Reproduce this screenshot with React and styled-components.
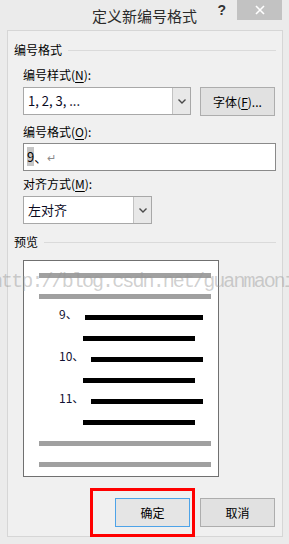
import React from 'react';
import styled, { createGlobalStyle } from 'styled-components';

const GlobalStyle = createGlobalStyle`
  html, body {
    margin: 0;
    padding: 0;
    background: #ebebeb;
  }
  body {
    font-family: "Noto Sans CJK SC", "Noto Sans", sans-serif;
    color: #000;
  }
`;

const App = () => {
  return (
    <>
      <GlobalStyle />
      <Window>
        <TitleBar>
          <Title>定义新编号格式</Title>
          <Controls>
            <Help>?</Help>
            <Close>
              <svg width="10" height="10" viewBox="0 0 10 10">
                <path d="M1 1 L9 9 M9 1 L1 9" stroke="#fff" strokeWidth="1.6" />
              </svg>
            </Close>
          </Controls>
        </TitleBar>

        <Body>
          <Client>
            <GroupHeader>编号格式</GroupHeader>
            <Fields>
              <Label $mt={9}>编号样式(<u>N</u>):</Label>
              <Row>
                <Combo $w={168}>
                  <ComboText>1, 2, 3, ...</ComboText>
                  <ComboArrow>
                    <Chevron />
                  </ComboArrow>
                </Combo>
                <Button>字体(<u>F</u>)...</Button>
              </Row>

              <Label $mt={8}>编号格式(<u>O</u>):</Label>
              <TextInput>
                <Selected>9</Selected>、<Para>↵</Para>
              </TextInput>

              <Label $mt={5}>对齐方式(<u>M</u>):</Label>
              <Row>
                <Combo $w={129}>
                  <ComboText>左对齐</ComboText>
                  <ComboArrow>
                    <Chevron />
                  </ComboArrow>
                </Combo>
              </Row>
            </Fields>

            <GroupHeader $mt={10}>预览</GroupHeader>
            <Preview>
              <GrayBar $mt={0} />
              <GrayBar $mt={16} />
              {['9、', '10、', '11、'].map((n) => (
                <Item key={n}>
                  <ItemRow>
                    <Num>{n}</Num>
                    <Bar />
                  </ItemRow>
                  <SubBar />
                </Item>
              ))}
              <GrayBar $mt={16} />
              <GrayBar $mt={16} />
            </Preview>

            <Footer>
              <OkWrap>
                <Button $primary>确定</Button>
                <Highlight />
              </OkWrap>
              <Button>取消</Button>
            </Footer>
          </Client>
        </Body>

        <Watermark>http://blog.csdn.net/guanmaoning</Watermark>
      </Window>
    </>
  );
};

const Chevron = () => (
  <svg width="8" height="5" viewBox="0 0 8 5">
    <polyline points="0.5,0.5 4,4 7.5,0.5" fill="none" stroke="#4a4a4a" strokeWidth="1.4" />
  </svg>
);

// Styled components
const Window = styled.div`
  position: relative;
  width: 289px;
  height: 544px;
  overflow: hidden;
  display: flex;
  flex-direction: column;
  background: #ebebeb;
  box-sizing: border-box;
`;

const TitleBar = styled.div`
  height: 30px;
  flex-shrink: 0;
  display: grid;
  grid-template-columns: 1fr auto 1fr;
`;

const Title = styled.div`
  grid-column: 2;
  font-size: 15px;
  line-height: 30px;
  padding-top: 1px;
  color: #2b2b2b;
  white-space: nowrap;
`;

const Controls = styled.div`
  grid-column: 3;
  display: flex;
  justify-content: flex-end;
  align-items: flex-start;
  padding-right: 7px;
`;

const Help = styled.div`
  font-family: "Liberation Sans", Arial, sans-serif;
  font-weight: bold;
  font-size: 14px;
  line-height: 20px;
  color: #333;
  margin-right: 11px;
`;

const Close = styled.div`
  width: 45px;
  height: 20px;
  background: #c2c2c2;
  display: flex;
  align-items: center;
  justify-content: center;
`;

const Body = styled.div`
  flex: 1;
  display: flex;
  padding: 0 7px 7px;
`;

const Client = styled.div`
  flex: 1;
  display: flex;
  flex-direction: column;
  border: 1px solid #d6d6d6;
  background: #f0f0f0;
  padding: 11px 6px 0;
`;

const GroupHeader = styled.div`
  display: flex;
  align-items: center;
  font-size: 12px;
  line-height: 16px;
  margin-top: ${({ $mt }) => $mt || 0}px;

  &::after {
    content: '';
    flex: 1;
    height: 1px;
    background: #dadada;
    margin-left: 6px;
  }
`;

const Fields = styled.div`
  display: flex;
  flex-direction: column;
  padding-left: 9px;
`;

const Label = styled.div`
  font-size: 12px;
  line-height: 16px;
  margin-top: ${({ $mt }) => $mt}px;

  u {
    text-decoration-thickness: 1px;
    text-underline-offset: 2px;
  }
`;

const Row = styled.div`
  display: flex;
  gap: 9px;
  margin-top: 4px;
`;

const Combo = styled.div`
  width: ${({ $w }) => $w}px;
  height: 28px;
  box-sizing: border-box;
  border: 1px solid #a8a8a8;
  background: #fff;
  display: flex;
`;

const ComboText = styled.div`
  flex: 1;
  padding-left: 4px;
  font-size: 13px;
  line-height: 26px;
  color: #0a0a1e;
`;

const ComboArrow = styled.div`
  width: 17px;
  border-left: 1px solid #c2c2c2;
  background: #e8e8e8;
  display: flex;
  align-items: center;
  justify-content: center;
`;

const Button = styled.div`
  width: 75px;
  height: 29px;
  box-sizing: border-box;
  border: 1px solid ${({ $primary }) => ($primary ? '#4da3e8' : '#adadad')};
  background: ${({ $primary }) => ($primary ? '#e5e5e5' : '#e1e1e1')};
  display: flex;
  align-items: center;
  justify-content: center;
  font-size: 12px;

  u {
    text-decoration-thickness: 1px;
    text-underline-offset: 2px;
  }
`;

const TextInput = styled.div`
  width: 253px;
  height: 28px;
  margin-top: 3px;
  box-sizing: border-box;
  border: 1px solid #8a8a8a;
  background: #fff;
  padding-left: 3px;
  font-size: 13px;
  line-height: 26px;
  white-space: nowrap;
`;

const Selected = styled.span`
  background: #c6c6c6;
`;

const Para = styled.span`
  color: #8a8a8a;
  font-size: 11px;
`;

const Preview = styled.div`
  width: 196px;
  height: 217px;
  box-sizing: border-box;
  margin: 10px 0 0 9px;
  border: 1px solid #707070;
  background: #fff;
  display: flex;
  flex-direction: column;
  padding: 12px 7px 0 15px;
`;

const GrayBar = styled.div`
  height: 5px;
  background: #a0a0a0;
  margin-top: ${({ $mt }) => $mt}px;
`;

const Item = styled.div`
  display: flex;
  flex-direction: column;
  margin-top: 8px;
`;

const ItemRow = styled.div`
  display: flex;
  align-items: flex-end;
  height: 14px;
  padding: 0 8px 0 20px;
`;

const Num = styled.span`
  font-size: 12px;
  line-height: 14px;
  color: #111133;
  white-space: nowrap;
`;

const Bar = styled.div`
  flex: 1;
  height: 5px;
  background: #000;
  margin: 0 0 1px 7px;
`;

const SubBar = styled.div`
  height: 5px;
  background: #000;
  margin: 15px 16px 0 44px;
`;

const Footer = styled.div`
  display: flex;
  justify-content: flex-end;
  gap: 10px;
  margin-top: 21px;
  padding-right: 1px;
`;

const OkWrap = styled.div`
  position: relative;
`;

const Highlight = styled.span`
  position: absolute;
  top: -10px;
  bottom: -10px;
  left: -25px;
  right: -5px;
  border: 3px solid #ff0000;
  pointer-events: none;
`;

const Watermark = styled.span`
  position: absolute;
  top: 272px;
  left: -9px;
  font-family: "Liberation Mono", "Courier New", monospace;
  font-size: 20px;
  line-height: 1;
  letter-spacing: -1.9px;
  color: rgba(150, 150, 150, 0.45);
  white-space: nowrap;
  pointer-events: none;
`;

export default App;
